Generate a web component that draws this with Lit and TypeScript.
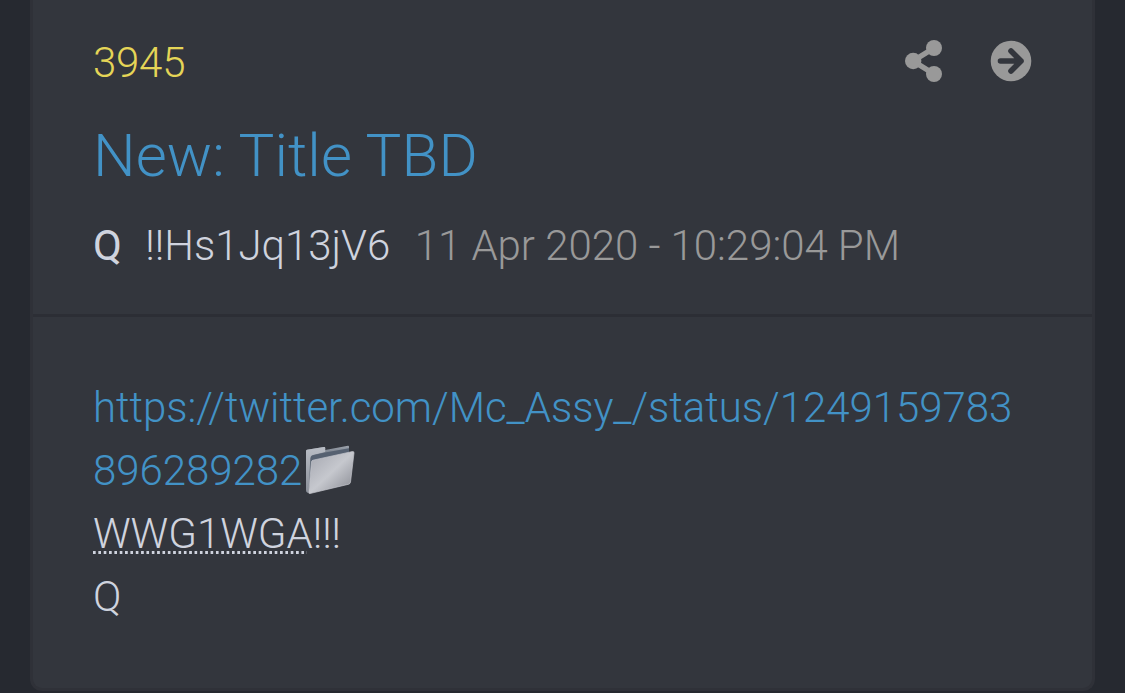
import {customElement, property} from "lit/decorators.js";
import {css, html, LitElement} from "lit";

interface Post {
  id: string;
  title: string;
  name: string;
  trip: string;
  date: string;
  link: string;
}

@customElement("folder-icon")
export class FolderIcon extends LitElement {

  //language=css
  static styles = css`
    :host {
      display: inline-block;
      width: 50px;
      height: 50px;
      margin-left: 3px;
      vertical-align: -10px;
    }

    svg {
      display: block;
    }
  `;

  render() {
    return html`
        <svg width="50" height="50" viewBox="0 0 50 50">
            <defs>
                <linearGradient id="back" x1="0" y1="0" x2="0" y2="1">
                    <stop offset="0" stop-color="#9da3ad"></stop>
                    <stop offset="0.25" stop-color="#626b78"></stop>
                    <stop offset="1" stop-color="#747a85"></stop>
                </linearGradient>
                <linearGradient id="side" x1="0" y1="0" x2="0" y2="1">
                    <stop offset="0" stop-color="#b9bdc5"></stop>
                    <stop offset="1" stop-color="#8b9099"></stop>
                </linearGradient>
                <linearGradient id="front" x1="0" y1="0" x2="1" y2="1">
                    <stop offset="0" stop-color="#a4a6af"></stop>
                    <stop offset="0.5" stop-color="#c6c8ce"></stop>
                    <stop offset="1" stop-color="#85878f"></stop>
                </linearGradient>
            </defs>
            <path fill="url(#back)" d="M1 6q0-1 1-1.300L19 2q1.200-.2 1.200 1v2L43 .8q1-.1 1 1V6L8 17 3 48q-2-.6-2-3z"></path>
            <path fill="url(#side)" d="M1 6q0-1 1-1.300L19 2q1.200-.2 1.200 1v4L8 10q-2.500.6-2.700 3L3.500 48Q1 47 1 45z"></path>
            <path fill="#566171" d="M6 12.500q.2-1.800 2-2.300L20 7.500 44 3.300V8L8.500 16 6.500 20 5 42z"></path>
            <path fill="url(#front)" stroke="#c4c6cd" stroke-width="0.700" d="M8 15.200L47.500 6.500q1.700-.2 1.500 1.500L45.500 37q-.2 1.700-1.700 2.200L5 48.500q-1.500.3-1.200-1.500L6.500 17q.1-1.500 1.500-1.800z"></path>
        </svg>
    `;
  }
}

@customElement("post-card")
export class PostCard extends LitElement {

  @property({attribute: false}) post?: Post;

  //language=css
  static styles = css`
    * {
        box-sizing: border-box;
    }

    :host {
      display: flex;
      flex-direction: column;
      box-sizing: border-box;
      height: 691px;
      border: 3px solid #2f3138;
      border-top: none;
      border-radius: 0 0 12px 12px;
      background-color: #33363d;
      color: #cfd3de;
    }

    .header {
        display: flex;
        flex-direction: column;
        height: 317px;
        padding: 31px 60px 0;
        border-bottom: 3px solid #2c2e35;
    }

    .top {
        display: flex;
        justify-content: space-between;
    }

    .number {
        color: #e5d557;
        letter-spacing: -0.25px;
    }

    .actions {
        display: flex;
        align-items: center;
        gap: 47px;
        height: 60px;
    }

    .actions svg {
        display: block;
        fill: #999999;
    }

    .title {
        margin: 26px 0 22px;
        color: #4292c6;
        font-size: 60px;
        font-weight: 300;
        line-height: 72px;
        letter-spacing: 0.1px;
    }

    .meta {
        display: flex;
        white-space: nowrap;
    }

    .name {
        margin-right: 23.500px;
        font-weight: 400;
    }

    .trip {
        margin-right: 24.500px;
    }

    .date {
        color: #999999;
    }

    .body {
        padding: 59px 60px 0;
    }

    .line {
        height: 63px;
    }

    .link {
        height: 126px;
        color: #4292c6;
        word-break: break-all;
    }

    /* dotted underline that stops just before the last letter's edge */
    .abbr {
        padding-bottom: 1px;
        background-image:
            linear-gradient(#33363d, #33363d),
            linear-gradient(to right, #cfd3de 3px, transparent 3px);
        background-repeat: no-repeat, repeat-x;
        background-position: right bottom 4px, left bottom 4px;
        background-size: 6px 3px, 5.350px 3px;
        background-clip: content-box;
        background-origin: content-box;
    }
  `;

  render() {
    return html`
        <div class="header">
            <div class="top">
                <span class="number">${this.post?.id}</span>
                <div class="actions">
                    <svg width="38" height="42" viewBox="0 0 38 42">
                        <path d="M8 21L29 8M8 21l21 13" stroke="#999999" stroke-width="5.500"></path>
                        <circle cx="8.200" cy="21" r="8.200"></circle>
                        <circle cx="29" cy="8" r="8"></circle>
                        <circle cx="29" cy="34" r="8"></circle>
                    </svg>
                    <svg width="42" height="42" viewBox="0 0 42 42">
                        <circle cx="21" cy="21" r="20.300"></circle>
                        <path d="M10.500 21H31M21 11l10 10-10 10" fill="none" stroke="#33363d" stroke-width="5.600" stroke-linecap="round" stroke-linejoin="round"></path>
                    </svg>
                </div>
            </div>
            <h2 class="title">${this.post?.title}</h2>
            <div class="meta">
                <span class="name">${this.post?.name}</span>
                <span class="trip">${this.post?.trip}</span>
                <span class="date">${this.post?.date}</span>
            </div>
        </div>
        <div class="body">
            <div class="link">${this.post?.link}<folder-icon></folder-icon></div>
            <div class="line"><span class="abbr">WWG1WGA</span>!!!</div>
            <div class="line">Q</div>
        </div>
    `;
  }
}

@customElement("app-root")
export class AppRoot extends LitElement {

  post: Post = {
    id: "3945",
    title: "New: Title TBD",
    name: "Q",
    trip: "!!Hs1Jq13jV6",
    date: "11 Apr 2020 - 10:29:04 PM",
    link: "https://twitter.com/Mc_Assy_/status/1249159783896289282"
  };

  //language=css
  static styles = css`
    :host {
      display: block;
      box-sizing: border-box;
      height: 693px;
      padding: 0 30px;
      overflow: hidden;
      background-color: #262930;
      font-family: Roboto, "Liberation Sans", sans-serif;
      font-size: 42px;
      font-weight: 300;
      line-height: 63px;
      letter-spacing: -0.04px;
    }
  `;

  render() {
    return html`
        <post-card .post="${this.post}"></post-card>
    `;
  }
}
